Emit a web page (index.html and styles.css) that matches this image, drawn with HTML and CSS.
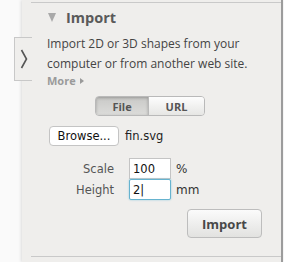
FILE: index.html
```html
<!DOCTYPE html>
<html lang="en">
<head>
  <meta charset="UTF-8">
  <title>Import</title>
  <link rel="stylesheet" href="styles.css">
</head>
<body>
  <div class="panel">
    <button type="button" class="side-tab">
      <svg width="8" height="20" viewBox="0 0 8 20"><polyline points="1.5,1 6.5,10 1.5,19" fill="none" stroke="#555" stroke-width="1.6"/></svg>
    </button>
    <section class="import-section">
      <h2 class="section-title"><span class="caret"></span>Import</h2>
      <p class="intro">Import 2D or 3D shapes from your computer or from another web site.</p>
      <a class="more" href="#">More <span class="more-arrow"></span></a>

      <div class="segmented">
        <button type="button" class="seg seg-active">File</button>
        <button type="button" class="seg">URL</button>
      </div>

      <div class="file-row">
        <button type="button" class="browse">Browse...</button>
        <span class="file-name">fin.svg</span>
      </div>

      <div class="field-row">
        <label class="field-label" for="scale">Scale</label>
        <input class="field-input" id="scale" type="text" value="100">
        <span class="unit">%</span>
      </div>
      <div class="field-row">
        <label class="field-label" for="height">Height</label>
        <input class="field-input focused" id="height" type="text" value="2|">
        <span class="unit">mm</span>
      </div>

      <div class="actions">
        <button type="button" class="import-btn">Import</button>
      </div>
    </section>
  </div>
</body>
</html>
```

FILE: styles.css
```css
* {
  box-sizing: border-box;
}
html {
  font-family: 'Open Sans', 'Liberation Sans', sans-serif;
}
body {
  margin: 0;
  background: #fafafa;
  height: 262px;
  overflow: hidden;
}
.panel {
  position: relative;
  margin-left: 22px;
  width: 261px;
  height: 262px;
  padding-top: 2px;
  background: #efeeec;
  border-right: 2px solid #9c9c9c;
  box-shadow: -1px 0 3px rgba(0, 0, 0, 0.12);
}
.side-tab {
  position: absolute;
  left: -8px;
  top: 37px;
  width: 18px;
  height: 44px;
  padding: 0;
  display: flex;
  align-items: center;
  justify-content: center;
  background: #efeeec;
  border: 1px solid #c8c8c8;
  border-right: none;
}
.import-section {
  margin-left: 9px;
  height: 255px;
  padding: 0 0 0 16px;
  border-top: 1px solid #c9c9c9;
  border-bottom: 1px solid #c9c9c9;
}
.section-title {
  display: flex;
  align-items: center;
  margin: 0;
  padding-top: 0;
  height: 28px;
  font-size: 14.5px;
  font-weight: bold;
  color: #5a5a5a;
}
.caret {
  width: 0;
  height: 0;
  margin: 0 10px 0 1px;
  border-left: 4.5px solid transparent;
  border-right: 4.5px solid transparent;
  border-top: 9px solid #a9a9a9;
}
.intro {
  margin: 3px 0 0;
  width: 215px;
  font-size: 12px;
  line-height: 20px;
  color: #444;
}
.more {
  display: flex;
  align-items: center;
  width: max-content;
  font-size: 11px;
  font-weight: bold;
  color: #9a9a9a;
  text-decoration: none;
  line-height: 14px;
}
.more-arrow {
  width: 0;
  height: 0;
  margin-left: 4px;
  border-top: 3px solid transparent;
  border-bottom: 3px solid transparent;
  border-left: 4px solid #9a9a9a;
}
.segmented {
  display: flex;
  width: 110px;
  height: 20px;
  margin: 8px 0 0 48px;
  border: 1px solid #b9b9b9;
  border-radius: 4px;
  overflow: hidden;
}
.seg {
  flex: 1;
  padding: 0;
  border: none;
  font: inherit;
  font-size: 11px;
  font-weight: bold;
  color: #555;
  background: linear-gradient(#fdfdfd, #e6e6e4);
}
.seg-active {
  flex: 0 0 53px;
  background: linear-gradient(#c9c9c7, #dcdcda);
  box-shadow: inset 0 1px 3px rgba(0, 0, 0, 0.25);
  border-right: 1px solid #b9b9b9;
}
.file-row {
  display: flex;
  align-items: center;
  margin-top: 10px;
  height: 20px;
}
.browse {
  width: 70px;
  height: 20px;
  margin-left: 2px;
  padding: 0;
  background: #fff;
  border: 1px solid #c4c4c4;
  border-radius: 4px;
  font-family: 'DejaVu Sans', sans-serif;
  font-size: 11.5px;
  color: #111;
}
.file-name {
  margin-left: 6px;
  font-family: 'DejaVu Sans', sans-serif;
  font-size: 11.5px;
  color: #222;
}
.field-row {
  display: flex;
  align-items: center;
  height: 21px;
}
.file-row + .field-row {
  margin-top: 12px;
}
.field-label {
  width: 67px;
  text-align: right;
  font-family: 'DejaVu Sans', sans-serif;
  font-size: 11.5px;
  color: #555;
}
.field-input {
  width: 42px;
  height: 21px;
  margin-left: 15px;
  padding: 0 3px;
  border: 1px solid #c4c4c4;
  background: #fff;
  font-family: 'DejaVu Sans', sans-serif;
  font-size: 11.5px;
  color: #111;
}
.focused {
  border: 1px solid #66b3cf;
  box-shadow: 0 0 2px #8cc8dc;
  border-radius: 2px;
}
.unit {
  margin-left: 5px;
  font-family: 'DejaVu Sans', sans-serif;
  font-size: 12px;
  color: #333;
}
.actions {
  display: flex;
  justify-content: flex-end;
  margin: 9px 19px 0 0;
}
.import-btn {
  width: 75px;
  height: 29px;
  padding: 0;
  border: 1px solid #bdbdbd;
  border-radius: 4px;
  background: linear-gradient(#fbfbfb, #e2e2e0);
  font: inherit;
  font-size: 13px;
  font-weight: bold;
  color: #484848;
}
```
